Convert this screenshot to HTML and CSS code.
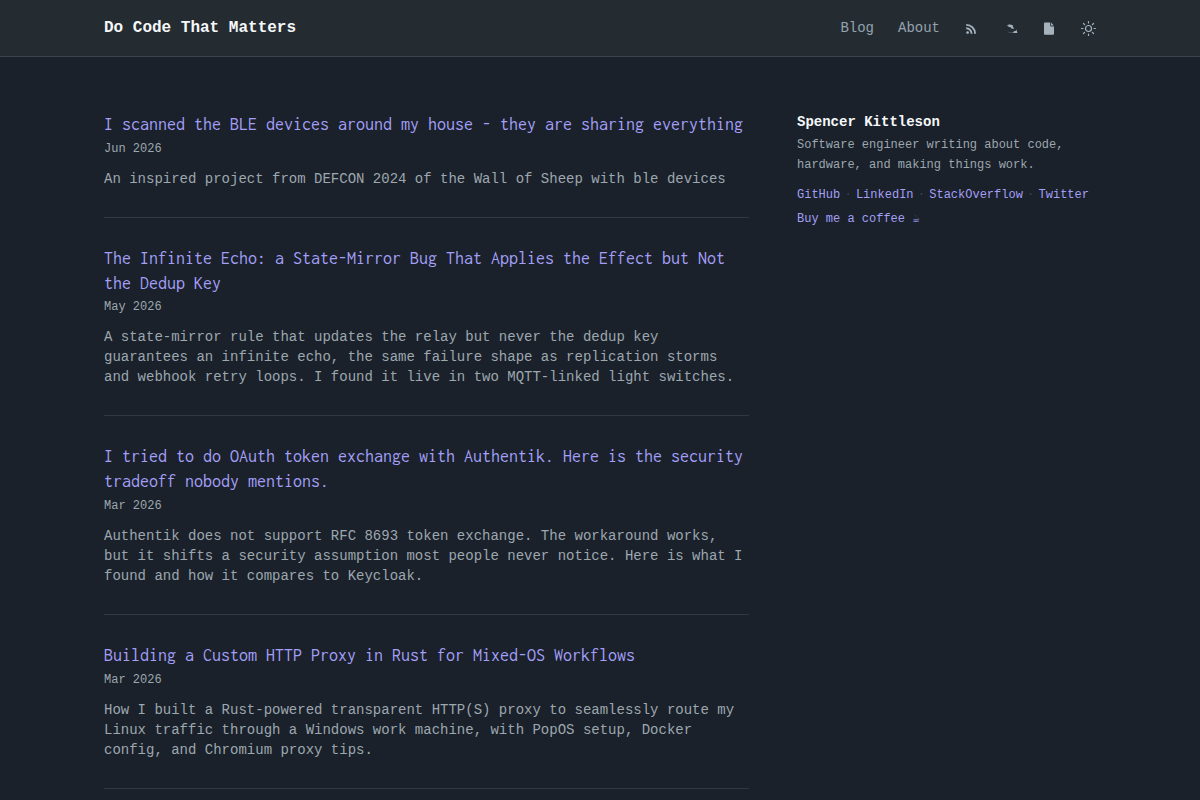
FILE: index.html
```html
<!DOCTYPE html>
<html lang="en">
<head>
  <meta charset="UTF-8">
  <meta name="viewport" content="width=device-width, initial-scale=1.0">
  <title>Do Code That Matters</title>
  <link rel="stylesheet" href="styles.css">
</head>
<body>
  <header class="header">
    <div class="header-inner">
      <a class="brand" href="#">Do Code That Matters</a>
      <nav class="nav">
        <a href="#">Blog</a>
        <a href="#">About</a>
        <a href="#" class="icon" aria-label="RSS">
          <svg width="14" height="14" viewBox="0 0 14 14" fill="none" stroke="currentColor" stroke-width="1.9">
            <circle cx="3.6" cy="10.6" r="1.4" fill="currentColor" stroke="none"/>
            <path d="M2.2 6.3a5.3 5.3 0 0 1 5.4 5.4M2.2 2.9a8.8 8.8 0 0 1 8.9 8.8"/>
          </svg>
        </a>
        <a href="#" class="icon" aria-label="Projects">
          <svg width="16" height="14" viewBox="0 0 16 14" fill="currentColor">
            <path d="M4.6 3.2Q7.5 1.6 10.8 3.2L10.8 4.5 12.2 6.8 9.4 6.4 8.2 5.1 5.4 4.7 7 4Z"/>
            <path d="M11.8 9.2 13.6 9 14.4 7.4 15.4 11 11 11.1Z"/>
            <path d="M5 9.7 11.6 10.2 11.4 11 7 10.6Z" opacity=".4"/>
          </svg>
        </a>
        <a href="#" class="icon" aria-label="Resume">
          <svg width="14" height="14" viewBox="0 0 14 14" fill="currentColor">
            <path d="M3 .4h5.2v3.2a.8.8 0 0 0 .8.8h3v7.3a1 1 0 0 1-1 1H3a1 1 0 0 1-1-1V1.4a1 1 0 0 1 1-1z"/>
            <path d="M9 .6 11.8 3.6H9z"/>
          </svg>
        </a>
        <a href="#" class="icon icon-theme" aria-label="Toggle theme">
          <svg width="16" height="16" viewBox="0 0 16 16" fill="none" stroke="currentColor" stroke-width="1.2" stroke-linecap="round">
            <circle cx="8.5" cy="8.5" r="3"/>
            <path d="M8.5 1.5V3M8.5 14v1.4M1.5 8.5H3M14 8.5h1.4M3.5 3.5l1.1 1.1M12.4 12.4l1.1 1.1M3.5 13.5l1.1-1.1M12.4 4.6l1.1-1.1"/>
          </svg>
        </a>
      </nav>
    </div>
  </header>

  <div class="container">
    <main class="posts">
      <article class="post">
        <h2><a href="#">I scanned the BLE devices around my house - they are sharing everything</a></h2>
        <time>Jun 2026</time>
        <p>An inspired project from DEFCON 2024 of the Wall of Sheep with ble devices</p>
      </article>
      <article class="post">
        <h2><a href="#">The Infinite Echo: a State-Mirror Bug That Applies the Effect but Not the Dedup Key</a></h2>
        <time>May 2026</time>
        <p>A state-mirror rule that updates the relay but never the dedup key guarantees an infinite echo, the same failure shape as replication storms and webhook retry loops. I found it live in two MQTT-linked light switches.</p>
      </article>
      <article class="post">
        <h2><a href="#">I tried to do OAuth token exchange with Authentik. Here is the security tradeoff nobody mentions.</a></h2>
        <time>Mar 2026</time>
        <p>Authentik does not support RFC 8693 token exchange. The workaround works, but it shifts a security assumption most people never notice. Here is what I found and how it compares to Keycloak.</p>
      </article>
      <article class="post">
        <h2><a href="#">Building a Custom HTTP Proxy in Rust for Mixed-OS Workflows</a></h2>
        <time>Mar 2026</time>
        <p>How I built a Rust-powered transparent HTTP(S) proxy to seamlessly route my Linux traffic through a Windows work machine, with PopOS setup, Docker config, and Chromium proxy tips.</p>
      </article>
    </main>

    <aside class="sidebar">
      <h3>Spencer Kittleson</h3>
      <p>Software engineer writing about code, hardware, and making things work.</p>
      <div class="links">
        <a href="#">GitHub</a><span>·</span><a href="#">LinkedIn</a><span>·</span><a href="#">StackOverflow</a><span>·</span><a href="#">Twitter</a>
      </div>
      <a class="coffee" href="#">Buy me a coffee ☕</a>
    </aside>
  </div>
</body>
</html>
```
FILE: styles.css
```css
* {
  box-sizing: border-box;
}
body {
  margin: 0;
  height: 100vh;
  overflow: hidden;
  background: #1a212a;
  color: #9da7af;
  font-family: "Liberation Mono", monospace;
  font-size: 14px;
}
a {
  color: #a39ff7;
  text-decoration: none;
}
h2, h3, p {
  margin: 0;
}
.header {
  height: 57px;
  background: #252c31;
  border-bottom: 1px solid #3c444a;
}
.header-inner {
  display: flex;
  justify-content: space-between;
  align-items: center;
  width: 992px;
  height: 56px;
  margin: 0 auto;
}
.brand {
  color: #f5f8fa;
  font-size: 16px;
  font-weight: bold;
}
.nav {
  display: flex;
  align-items: center;
  gap: 24px;
}
.nav a {
  color: #94a3b0;
}
.icon {
  display: flex;
  padding-top: 2px;
}
.nav .icon {
  color: #a5b3bf;
}
.icon-theme {
  padding-top: 0;
}
.container {
  display: grid;
  grid-template-columns: 645px 299px;
  gap: 48px;
  width: 992px;
  margin: 0 auto;
  padding-top: 55px;
}
.post {
  padding-bottom: 28.2px;
  margin-bottom: 28px;
  border-bottom: 1px solid #303840;
}
.post h2 {
  font-family: Inconsolata, "Noto Sans Mono CJK SC", "Liberation Mono", monospace;
  font-size: 18px;
  font-weight: normal;
  line-height: 25px;
}
.post time {
  display: block;
  margin-top: 1.5px;
  font-size: 12px;
  line-height: 20px;
}
.post p {
  margin-top: 10px;
  line-height: 20px;
}
.sidebar h3 {
  color: #f5f8fa;
  font-size: 14px;
  line-height: 20px;
}
.sidebar p {
  margin-top: 3px;
  font-size: 12px;
  line-height: 20px;
}
.links {
  display: flex;
  justify-content: space-between;
  width: 292px;
  margin-top: 10px;
  font-size: 12px;
  line-height: 20px;
}
.links span {
  color: #39424d;
}
.coffee {
  display: block;
  margin-top: 4px;
  font-size: 12px;
  line-height: 20px;
}
```
